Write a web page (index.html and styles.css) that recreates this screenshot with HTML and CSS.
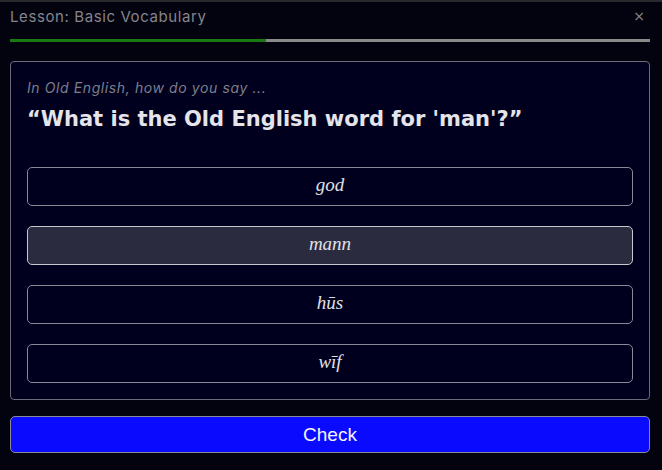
FILE: index.html
```html
<!DOCTYPE html>
<html>
<head>
<meta charset="utf-8">
<link rel="stylesheet" href="styles.css">
</head>
<body>
<div class="app">
  <div class="header">
    <span class="title">Lesson: Basic Vocabulary</span>
    <span class="close">×</span>
  </div>
  <div class="progress"><div class="progress-fill" style="width: 40%"></div></div>
  <div class="card">
    <div class="prompt">In Old English, how do you say ...</div>
    <div class="question">“What is the Old English word for 'man'?”</div>
    <div class="options">
      <div class="option">god</div>
      <div class="option selected">mann</div>
      <div class="option">hūs</div>
      <div class="option">wīf</div>
    </div>
  </div>
  <button class="check">Check</button>
</div>
</body>
</html>
```
FILE: styles.css
```css
html, body {
  margin: 0;
  padding: 0;
  background: #03030f;
}
body {
  border-top: 2px solid #2a2a2e;
  font-family: Inter, "Open Sans", sans-serif;
}
.app {
  padding: 0 12px 0 10px;
}
.header {
  display: flex;
  justify-content: space-between;
  align-items: center;
  height: 28px;
}
.title {
  color: #85858d;
  font-size: 15px;
  letter-spacing: 0.6px;
}
.close {
  color: #8a8a8a;
  font-size: 14px;
  padding-right: 5px;
  font-family: "DejaVu Sans", sans-serif;
}
.progress {
  margin-top: 9px;
  height: 3px;
  background: #8a8a8a;
}
.progress-fill {
  height: 100%;
  background: #1a7a12;
}
.card {
  margin-top: 19px;
  border: 1px solid #6a6a78;
  border-radius: 4px;
  background: #00001e;
  padding: 16px;
}
.prompt {
  color: #7e7e8a;
  font-style: italic;
  font-size: 14px;
  line-height: 20px;
  letter-spacing: 0.6px;
}
.question {
  margin-top: 7px;
  color: #e4e4ea;
  font-family: "DejaVu Sans", sans-serif;
  font-weight: 700;
  font-size: 21px;
  line-height: 28px;
}
.options {
  margin-top: 34px;
  display: flex;
  flex-direction: column;
  gap: 20px;
}
.option {
  height: 37px;
  border: 1px solid #8a8a96;
  border-radius: 5px;
  text-align: center;
  line-height: 33px;
  color: #e0e0e8;
  font-family: "Liberation Serif", serif;
  font-style: italic;
  font-size: 19px;
}
.option.selected {
  background: #2b2b40;
  border-color: #c8c8d0;
}
.check {
  display: block;
  width: 100%;
  margin-top: 16px;
  height: 37px;
  background: #0a0aff;
  border: 1px solid #8a8a96;
  border-radius: 5px;
  color: #f4f4ff;
  font-family: "Liberation Sans", Arial, sans-serif;
  font-size: 19px;
}
```
